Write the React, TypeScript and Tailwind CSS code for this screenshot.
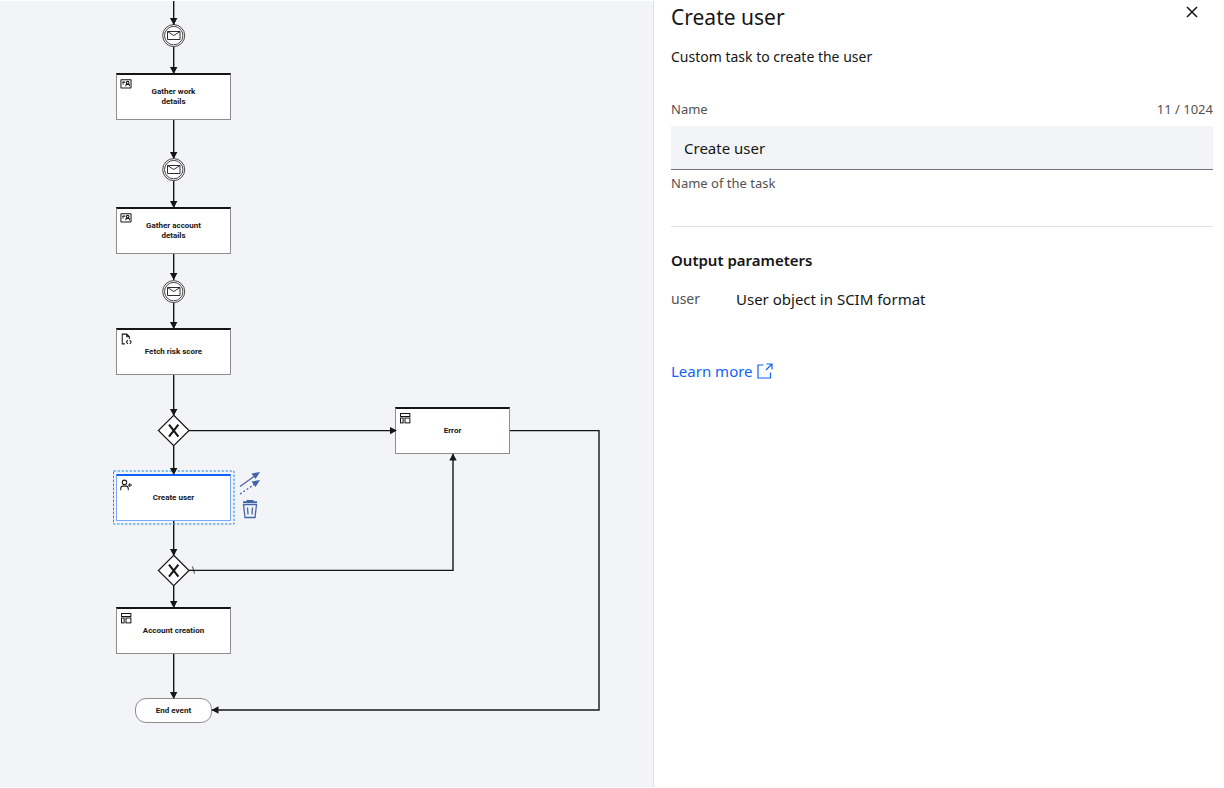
import { useState, type ReactNode } from "react";

type IconKind = "form" | "script" | "user" | "page";

interface TaskNode {
  id: string;
  label: string;
  x: number;
  y: number;
  icon: IconKind;
  selected?: boolean;
}

const tasks: TaskNode[] = [
  { id: "work", label: "Gather work details", x: 116, y: 72, icon: "form" },
  { id: "account", label: "Gather account details", x: 116, y: 206, icon: "form" },
  { id: "risk", label: "Fetch risk score", x: 116, y: 327, icon: "script" },
  { id: "create", label: "Create user", x: 116, y: 473, icon: "user", selected: true },
  { id: "creation", label: "Account creation", x: 116, y: 606, icon: "page" },
  { id: "error", label: "Error", x: 395, y: 406, icon: "page" },
];

const messageEvents = [34, 168, 290];
const gateways = [429, 569];

const flows = [
  "M173.7 0V24",
  "M173.7 46V72",
  "M173.7 119V157",
  "M173.7 180V206",
  "M173.7 253V279",
  "M173.7 302V327",
  "M173.7 374V414",
  "M173.7 445V473",
  "M173.7 520V554",
  "M173.7 585V607",
  "M173.7 653V697",
  "M189 429.6H396",
  "M189 569.4H453V453",
  "M510 429.6H599V709H212",
];

const drawings: Record<IconKind, ReactNode> = {
  form: (
    <>
      <rect x="2.5" y="4.5" width="27" height="22" rx="1" />
      <path d="M7 11h7M7 11v3M7 16h3" />
      <circle cx="20.5" cy="12.5" r="3.500" />
      <path d="M15.500 22v-2q0-3 3-3h4q3 0 3 3v2" />
    </>
  ),
  script: (
    <>
      <path d="M13 29H6V3h12l7 7v6M18 3v7h7" />
      <path d="M21 19l-4 5 4 5M26 19l4 5-4 5" />
    </>
  ),
  user: (
    <>
      <circle cx="12" cy="9" r="6" />
      <path d="M2 30v-5q0-6 6-6h8q6 0 6 6v5M26 11v10M21 16h11" />
    </>
  ),
  page: (
    <>
      <rect x="4" y="4" width="25" height="8" />
      <rect x="4" y="16" width="7" height="13" />
      <rect x="16" y="16" width="13" height="13" />
    </>
  ),
};

function TaskIcon({ kind }: { kind: IconKind }) {
  return (
    <svg viewBox="0 0 32 32" className="absolute left-[3px] top-[3px] size-3 text-[#161616]" fill="none" stroke="currentColor" strokeWidth="2.7" aria-hidden="true">
      {drawings[kind]}
    </svg>
  );
}

function Connections() {
  return (
    <svg className="absolute left-0 top-0 h-[786px] w-[653px]" viewBox="0 0 653 786" fill="none" stroke="#161616" aria-hidden="true">
      {messageEvents.map((y) => (
        <g key={y}>
          <circle cx="173.7" cy={y + 0.6} r="11" fill="#fff" strokeWidth="0.8" />
          <circle cx="173.7" cy={y + 0.6} r="9.2" strokeWidth="0.8" />
          <path d={`M167.5 ${y - 3.5}h12.500v8h-12.500zl6.250 4 6.250-4`} strokeWidth="0.9" />
        </g>
      ))}
      {flows.map((d) => (
        <path key={d} d={d} strokeWidth="1.4" />
      ))}
      {gateways.map((y) => (
        <g key={y}>
          <path d={`M173.700 ${y - 14.7}l15.300 15.200-15.300 15.200-15.300-15.200z`} fill="#fff" strokeWidth="1.2" />
          <path d={`M169 ${y - 5.3}l9.400 12M178.400 ${y - 5.3}l-9.400 12`} strokeWidth="2.100" />
        </g>
      ))}
      <rect x="113.5" y="470" width="120.500" height="53" stroke="#1192e8" strokeWidth="1" strokeDasharray="2.5 1.5" />
      <path d="M192.500 565.500l2 7" strokeWidth="0.8" />
    </svg>
  );
}

const downArrowTips = [24, 73, 158, 207, 279, 328, 415, 474, 555, 607, 698];

function ArrowHeads() {
  return (
    <svg className="pointer-events-none absolute left-0 top-0 z-20 h-[786px] w-[653px]" viewBox="0 0 653 786" fill="#161616" aria-hidden="true">
      {downArrowTips.map((y) => (
        <path key={y} d={`M170 ${y - 7}h7.400l-3.700 7z`} />
      ))}
      <path d="M390 426l7 3.600-7 3.600zM449.300 459.500h7.400l-3.700-7zM218.500 705.300v7.400l-7-3.700z" />
    </svg>
  );
}

function Task({ task }: { task: TaskNode }) {
  const frame = task.selected
    ? "border-[#78a9ff] border-t-[#0f62fe]"
    : "border-[#8d8d8d] border-t-[#161616]";
  return (
    <div
      className={`absolute z-10 flex h-[47px] w-[115px] items-center justify-center border border-t-2 bg-white px-6 text-center ${frame}`}
      style={{ left: task.x, top: task.y }}
    >
      <TaskIcon kind={task.icon} />
      <span className="font-['Roboto',sans-serif] text-[8px] font-bold leading-[10px] text-[#161616]">{task.label}</span>
    </div>
  );
}

function SelectionTools() {
  return (
    <div className="absolute left-[239px] top-[470px] z-30 flex flex-col gap-1 text-[#4464a9]">
      <button type="button" aria-label="Connect" className="block">
        <svg viewBox="0 0 22 24" className="h-6 w-[22px]" fill="none" stroke="currentColor" strokeWidth="1.3">
          <path d="M1 15.500L17 4" />
          <path d="M1 23l15-10" strokeDasharray="2 2" />
          <path d="M21 1l-4.500 7-4-5.500zM21 9l-4.500 7-4-5.500z" fill="currentColor" stroke="none" />
        </svg>
      </button>
      <button type="button" aria-label="Delete" className="block">
        <svg viewBox="0 0 22 20" className="h-5 w-[22px]" fill="none" stroke="currentColor" strokeWidth="1.3">
          <path d="M4.500 5.500h13l-1.500 13H6zM8.500 8.500l.5 7M13.500 8.500l-.5 7" />
          <path d="M4 3.200h14M7.500 1.800h7" strokeWidth="1.7" />
        </svg>
      </button>
    </div>
  );
}

function Canvas() {
  return (
    <section aria-label="Workflow" className="relative min-h-[786px] min-w-0 overflow-hidden border-r border-[#dde1e6] bg-[#f2f4f8]">
      <Connections />
      {tasks.map((task) => (
        <Task key={task.id} task={task} />
      ))}
      <div className="absolute left-[135px] top-[697px] z-10 flex h-[25px] w-[77px] items-center justify-center rounded-[11px] border border-[#8d8d8d] bg-white font-['Roboto',sans-serif] text-[8px] font-bold leading-[10px] text-[#161616]">
        End event
      </div>
      <ArrowHeads />
      <SelectionTools />
    </section>
  );
}

function DetailsPanel() {
  const [name, setName] = useState("Create user");
  return (
    <aside className="min-w-0 pl-[17px] pr-[11px] text-[#161616]">
      <header className="flex items-start justify-between">
        <h1 className="text-[21px] leading-8">Create user</h1>
        <button type="button" aria-label="Close" className="mr-[11px] mt-px flex size-5 items-center justify-center">
          <svg viewBox="0 0 14 14" className="size-[14px]" fill="none" stroke="currentColor" strokeWidth="1.5">
            <path d="M2 2l10 10M12 2L2 12" />
          </svg>
        </button>
      </header>
      <p className="mt-3 text-sm leading-6">Custom task to create the user</p>

      <div className="mt-[30px] flex justify-between text-[13px] leading-5 text-[#525252]">
        <label htmlFor="task-name">Name</label>
        <span>{name.length} / 1024</span>
      </div>
      <input
        id="task-name"
        aria-describedby="task-help"
        maxLength={1024}
        value={name}
        onChange={(event) => setName(event.target.value)}
        className="mt-[7px] block h-11 w-full border-b border-[#6f7680] bg-[#f2f4f8] px-[13px] text-[15px] outline-none"
      />
      <p id="task-help" className="mt-[3px] text-[13px] leading-5 text-[#525252]">Name of the task</p>

      <section className="mt-[33px] border-t border-[#dde1e6] pt-[23px]">
        <h2 className="text-[15px] font-semibold leading-5">Output parameters</h2>
        <dl className="mt-[19px] flex text-[15px] leading-5">
          <dt className="w-[65px] text-sm leading-5 text-[#525252]">user</dt>
          <dd>User object in SCIM format</dd>
        </dl>
      </section>

      <a href="#learn-more" className="mt-[52px] inline-flex items-center gap-1 text-[15px] leading-5 text-[#0f62fe]">
        Learn more
        <svg viewBox="0 0 16 16" className="size-4" fill="none" stroke="currentColor" strokeWidth="1.2" aria-hidden="true">
          <path d="M6.500 2H1v13h12.500V9.500M9.500 1H15v5.500M15 1L9 7" />
        </svg>
      </a>
    </aside>
  );
}

export default function App() {
  return (
    <main className="grid min-h-screen grid-cols-[654fr_570fr] bg-white py-px font-['Noto_Sans',sans-serif]">
      <Canvas />
      <DetailsPanel />
    </main>
  );
}
